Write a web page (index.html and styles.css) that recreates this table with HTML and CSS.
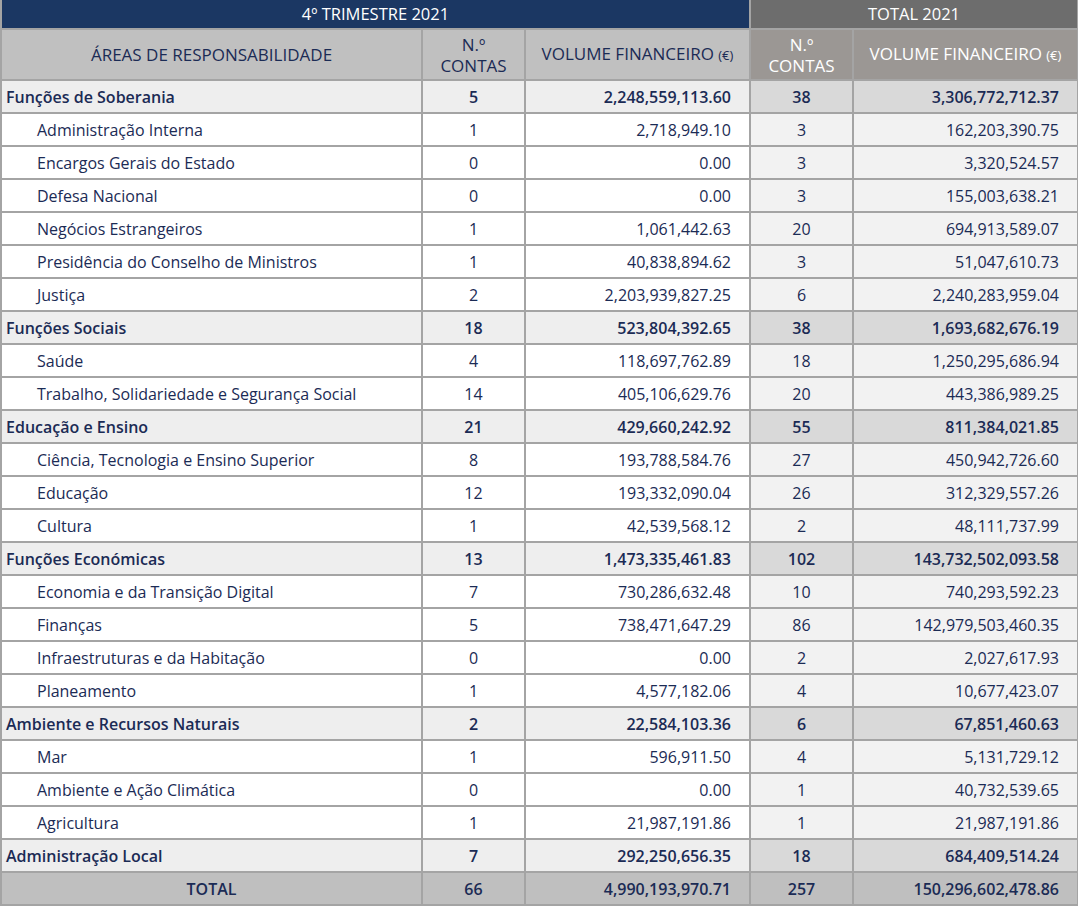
FILE: index.html
```html
<!DOCTYPE html>
<html lang="pt">
<head>
<meta charset="utf-8">
<title>Contas por áreas de responsabilidade</title>
<link rel="stylesheet" href="styles.css">
</head>
<body>
<table class="tbl">
  <colgroup>
    <col class="c-area"><col class="c-n"><col class="c-v"><col class="c-n"><col class="c-v">
  </colgroup>
  <thead>
    <tr class="h1">
      <th colspan="3" class="navy">4º TRIMESTRE 2021</th>
      <th colspan="2" class="dark">TOTAL 2021</th>
    </tr>
    <tr class="h2">
      <th class="lg">ÁREAS DE RESPONSABILIDADE</th>
      <th class="lg">N.º<br>CONTAS</th>
      <th class="lg">VOLUME FINANCEIRO <span class="eur">(€)</span></th>
      <th class="wg">N.º<br>CONTAS</th>
      <th class="wg">VOLUME FINANCEIRO <span class="eur">(€)</span></th>
    </tr>
  </thead>
  <tbody>
    <tr class="grp"><td class="name">Funções de Soberania</td><td class="n">5</td><td class="v">2,248,559,113.60</td><td class="n r">38</td><td class="v r">3,306,772,712.37</td></tr>
    <tr class="sub"><td class="name">Administração Interna</td><td class="n">1</td><td class="v">2,718,949.10</td><td class="n r">3</td><td class="v r">162,203,390.75</td></tr>
    <tr class="sub"><td class="name">Encargos Gerais do Estado</td><td class="n">0</td><td class="v">0.00</td><td class="n r">3</td><td class="v r">3,320,524.57</td></tr>
    <tr class="sub"><td class="name">Defesa Nacional</td><td class="n">0</td><td class="v">0.00</td><td class="n r">3</td><td class="v r">155,003,638.21</td></tr>
    <tr class="sub"><td class="name">Negócios Estrangeiros</td><td class="n">1</td><td class="v">1,061,442.63</td><td class="n r">20</td><td class="v r">694,913,589.07</td></tr>
    <tr class="sub"><td class="name">Presidência do Conselho de Ministros</td><td class="n">1</td><td class="v">40,838,894.62</td><td class="n r">3</td><td class="v r">51,047,610.73</td></tr>
    <tr class="sub"><td class="name">Justiça</td><td class="n">2</td><td class="v">2,203,939,827.25</td><td class="n r">6</td><td class="v r">2,240,283,959.04</td></tr>
    <tr class="grp"><td class="name">Funções Sociais</td><td class="n">18</td><td class="v">523,804,392.65</td><td class="n r">38</td><td class="v r">1,693,682,676.19</td></tr>
    <tr class="sub"><td class="name">Saúde</td><td class="n">4</td><td class="v">118,697,762.89</td><td class="n r">18</td><td class="v r">1,250,295,686.94</td></tr>
    <tr class="sub"><td class="name">Trabalho, Solidariedade e Segurança Social</td><td class="n">14</td><td class="v">405,106,629.76</td><td class="n r">20</td><td class="v r">443,386,989.25</td></tr>
    <tr class="grp"><td class="name">Educação e Ensino</td><td class="n">21</td><td class="v">429,660,242.92</td><td class="n r">55</td><td class="v r">811,384,021.85</td></tr>
    <tr class="sub"><td class="name">Ciência, Tecnologia e Ensino Superior</td><td class="n">8</td><td class="v">193,788,584.76</td><td class="n r">27</td><td class="v r">450,942,726.60</td></tr>
    <tr class="sub"><td class="name">Educação</td><td class="n">12</td><td class="v">193,332,090.04</td><td class="n r">26</td><td class="v r">312,329,557.26</td></tr>
    <tr class="sub"><td class="name">Cultura</td><td class="n">1</td><td class="v">42,539,568.12</td><td class="n r">2</td><td class="v r">48,111,737.99</td></tr>
    <tr class="grp"><td class="name">Funções Económicas</td><td class="n">13</td><td class="v">1,473,335,461.83</td><td class="n r">102</td><td class="v r">143,732,502,093.58</td></tr>
    <tr class="sub"><td class="name">Economia e da Transição Digital</td><td class="n">7</td><td class="v">730,286,632.48</td><td class="n r">10</td><td class="v r">740,293,592.23</td></tr>
    <tr class="sub"><td class="name">Finanças</td><td class="n">5</td><td class="v">738,471,647.29</td><td class="n r">86</td><td class="v r">142,979,503,460.35</td></tr>
    <tr class="sub"><td class="name">Infraestruturas e da Habitação</td><td class="n">0</td><td class="v">0.00</td><td class="n r">2</td><td class="v r">2,027,617.93</td></tr>
    <tr class="sub"><td class="name">Planeamento</td><td class="n">1</td><td class="v">4,577,182.06</td><td class="n r">4</td><td class="v r">10,677,423.07</td></tr>
    <tr class="grp"><td class="name">Ambiente e Recursos Naturais</td><td class="n">2</td><td class="v">22,584,103.36</td><td class="n r">6</td><td class="v r">67,851,460.63</td></tr>
    <tr class="sub"><td class="name">Mar</td><td class="n">1</td><td class="v">596,911.50</td><td class="n r">4</td><td class="v r">5,131,729.12</td></tr>
    <tr class="sub"><td class="name">Ambiente e Ação Climática</td><td class="n">0</td><td class="v">0.00</td><td class="n r">1</td><td class="v r">40,732,539.65</td></tr>
    <tr class="sub"><td class="name">Agricultura</td><td class="n">1</td><td class="v">21,987,191.86</td><td class="n r">1</td><td class="v r">21,987,191.86</td></tr>
    <tr class="grp"><td class="name">Administração Local</td><td class="n">7</td><td class="v">292,250,656.35</td><td class="n r">18</td><td class="v r">684,409,514.24</td></tr>
    <tr class="tot"><td class="name">TOTAL</td><td class="n">66</td><td class="v">4,990,193,970.71</td><td class="n">257</td><td class="v">150,296,602,478.86</td></tr>
  </tbody>
</table>
</body>
</html>
```

FILE: styles.css
```css
html, body {
  margin: 0;
  padding: 0;
  background: #ffffff;
}
body {
  font-family: "Open Sans", "Noto Sans", sans-serif;
  color: #1b2b55;
  font-size: 16px;
}
.tbl {
  width: 1078px;
  border-collapse: collapse;
  table-layout: fixed;
}
.c-area { width: 421px; }
.c-n { width: 103px; }
.c-v { width: 225px; }

.tbl th, .tbl td {
  border: 2px solid #a4a4a4;
  padding: 0;
  line-height: 20px;
  white-space: nowrap;
}
.tbl .h1 th {
  border-top: 0;
  height: 28px;
  color: #ffffff;
  font-weight: 500;
  font-size: 16.5px;
  text-align: center;
}
.navy { background: #1b3763; }
.dark { background: #6d6d6d; }
.tbl .h2 th {
  height: 49px;
  font-weight: 500;
  font-size: 17px;
  line-height: 21px;
  text-align: center;
}
.lg { background: #c0c0c0; color: #1b2b55; }
.wg { background: #9b9794; color: #ffffff; }
.eur { font-size: 13px; }

.tbl td { height: 31px; }
.tbl .name { text-align: left; }
.tbl .n { text-align: center; }
.tbl .v { text-align: right; padding-right: 18px; }

.grp td { background: #eeeeee; font-weight: 600; }
.tbl .grp .name { padding-left: 4px; }
.grp td.r { background: #d9d9d9; }
.sub td { background: #ffffff; }
.tbl .sub .name { padding-left: 35px; }
.sub td.r { background: #f2f2f2; }
.tot td { background: #bfbfbf; font-weight: 600; }
.tbl .tot .name { text-align: center; }
```
